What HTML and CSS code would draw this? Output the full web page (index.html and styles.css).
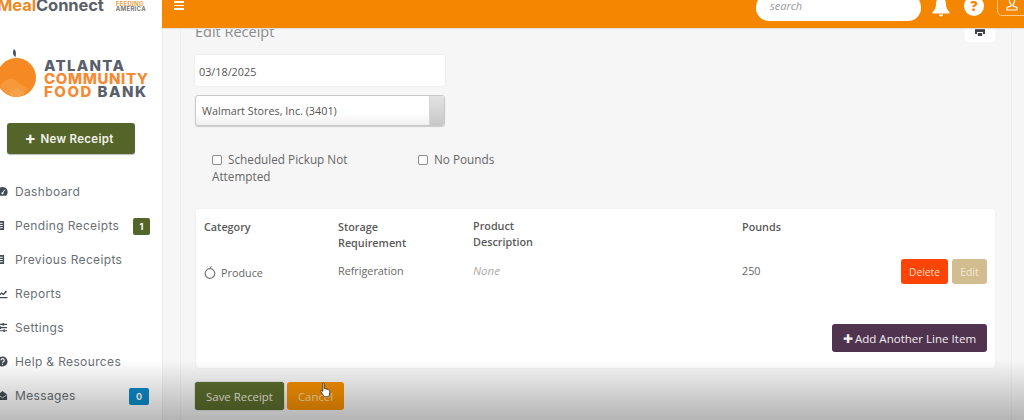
FILE: index.html
```html
<!DOCTYPE html>
<html lang="en">
<head>
<meta charset="utf-8">
<title>Edit Receipt</title>
<link rel="stylesheet" href="styles.css">
</head>
<body>
<div class="shell">
  <aside class="sidebar">
    <div class="brand">
      <span class="brand-name"><span class="brand-meal">Meal</span>Connect</span>
      <span class="brand-fa"><span class="fa-top">FEEDING</span><span>AMERICA</span></span>
    </div>
    <div class="logo">
      <svg class="apple" viewBox="0 0 38 50" width="38" height="50">
        <path d="M16 1c2 1.500 2.400 4 1.500 8-2.500-1-3.400-5-1.500-8z" fill="#4d5560"/>
        <circle cx="18.500" cy="29.500" r="19.500" fill="#f58a24"/>
        <path d="M2 38c4-6 11-9 15-6 3 2 8 7 14 9-4 5-8 8-13 8-7 0-13-5-16-11z" fill="#f7993a"/>
        <path d="M11 46c3-4 7-7 10-5l5 4c-2 2-5 4-8 4-3 0-5-1-7-3z" fill="#f6a24c"/>
      </svg>
      <div class="logo-text">
        <span class="logo-line logo-gray logo-top">ATLANTA</span>
        <span class="logo-line logo-orange">COMMUNITY</span>
        <span class="logo-line logo-bottom"><span class="logo-orange">FOOD</span> <span class="logo-gray">BANK</span></span>
      </div>
    </div>
    <button class="new-receipt"><span class="plus">+</span> New Receipt</button>
    <nav class="nav">
      <a class="nav-item"><svg class="nav-icon" viewBox="0 0 12 12"><path d="M6 1a5.500 5.500 0 0 0-5 8l1 1.500h8l1-1.500A5.500 5.500 0 0 0 6 1z" fill="#444b52"/><path d="M6 8 8.500 4" stroke="#fff" stroke-width="1" fill="none"/><circle cx="6" cy="8" r="1.200" fill="#fff"/></svg>Dashboard</a>
      <a class="nav-item"><svg class="nav-icon nav-icon-cut" viewBox="0 0 12 12"><path d="M1 1h10v10H1zM2.500 3v1.200h7V3zm0 2.400v1.200h7V5.400zm0 2.400V9h7V7.800z" fill="#444b52" fill-rule="evenodd"/></svg>Pending Receipts<span class="badge badge-green">1</span></a>
      <a class="nav-item"><svg class="nav-icon nav-icon-cut" viewBox="0 0 12 12"><path d="M1 1h10v10H1zM2.500 3v1.200h7V3zm0 2.400v1.200h7V5.400zm0 2.400V9h7V7.800z" fill="#444b52" fill-rule="evenodd"/></svg>Previous Receipts</a>
      <a class="nav-item"><svg class="nav-icon" viewBox="0 0 12 12"><path d="M1 9.800h10.500V11.200H1zM2 7.500l3-3 2 1.500L9.500 2.800 11 4 7 8 5 6.500 3 8.500z" fill="#444b52"/></svg>Reports</a>
      <a class="nav-item"><svg class="nav-icon" viewBox="0 0 12 12"><path d="M1 2h10v1.200H1zM1 5.500h10v1.200H1zM1 9h10v1.200H1zM6 1h1.500v3H6zM3 4.500h1.500v3H3zM7 8h1.500v3H7z" fill="#444b52"/></svg>Settings</a>
      <a class="nav-item"><svg class="nav-icon" viewBox="0 0 12 12"><circle cx="6" cy="6" r="5.500" fill="#444b52"/><path d="M4.300 4.600A1.800 1.800 0 1 1 6.800 6.300c-.6.300-.8.600-.8 1.100M6 8.500v1" stroke="#fff" stroke-width="1.200" fill="none"/></svg>Help &amp; Resources</a>
      <a class="nav-item"><svg class="nav-icon" viewBox="0 0 12 12"><path d="M1 5l5-4 5 4v6H1z" fill="#444b52"/><path d="M1.500 5.500 6 8.500l4.500-3" stroke="#fff" stroke-width=".8" fill="none"/></svg>Messages<span class="badge badge-blue">0</span></a>
    </nav>
  </aside>
  <div class="main">
    <header class="topbar">
      <div class="burger"><span></span><span></span><span></span></div>
      <div class="top-actions">
        <div class="search">search</div>
        <svg class="bell" viewBox="0 0 20 20" width="20" height="20"><path d="M10 0c3.500 0 5 2.500 5 6 0 4 1.500 6 3.500 8v1.500h-17V14c2-2 3.500-4 3.500-8 0-3.500 1.500-6 5-6z" fill="#fff"/><path d="M8 16.500h4c0 1-1 2-2 2s-2-1-2-2z" fill="#fff"/></svg>
        <div class="help">?</div>
        <div class="user"><svg viewBox="0 0 14 14" width="14" height="14"><path d="M4.500 1h5v4l-1.500 2.500v1.500l4 1.500V13H2v-2.500L6 9V7.500L4.500 5z" fill="none" stroke="#fff" stroke-width="1.200"/></svg></div>
      </div>
    </header>
    <div class="content">
      <div class="panel">
        <div class="title-row">
          <h1 class="title">Edit Receipt</h1>
          <div class="print"><svg viewBox="0 0 12 10" width="12" height="10"><path d="M3 0h6v3H3zM1 3h10v5H9V6H3v2H1zM3.800 7h4.400v3H3.800z" fill="#3f4347"/></svg></div>
        </div>
        <div class="field date-field">03/18/2025</div>
        <div class="field select-field"><span class="select-value">Walmart Stores, Inc. (3401)</span><span class="select-arrow"></span></div>
        <div class="checks">
          <label class="check check-wide"><span class="box"></span>Scheduled Pickup Not Attempted</label>
          <label class="check"><span class="box"></span>No Pounds</label>
        </div>
        <section class="card">
          <div class="table-head">
            <div>Category</div>
            <div>Storage<br>Requirement</div>
            <div class="head-shift">Product<br>Description</div>
            <div>Pounds</div>
          </div>
          <div class="table-row">
            <div class="cat"><svg class="cat-icon" viewBox="0 0 12 13" width="12" height="13"><circle cx="6" cy="7.500" r="4.800" fill="none" stroke="#777" stroke-width="1.200"/><path d="M6 3c0-1 .5-2 1.500-2.500" stroke="#777" stroke-width="1.200" fill="none"/></svg>Produce</div>
            <div>Refrigeration</div>
            <div class="none">None</div>
            <div class="pounds">250</div>
            <div class="row-actions"><button class="btn btn-delete">Delete</button><button class="btn btn-edit">Edit</button></div>
          </div>
          <div class="card-foot"><button class="btn-add"><span class="add-plus">✚</span>Add Another Line Item</button></div>
        </section>
        <div class="actions">
          <button class="btn-save">Save Receipt</button>
          <button class="btn-cancel">Cancel</button>
        </div>
      </div>
    </div>
  </div>
</div>
<div class="fade"></div>
<svg class="cursor" viewBox="0 0 14 20" width="11" height="16"><path d="M3.500 1.500c1-.8 2-.3 2 1V8l5 1.500c1.500.5 2 1 2 2.500l-.5 4c-.2 1.500-1 2.500-2.500 2.500H7c-1.200 0-2-.6-2.700-1.600L1 12c-.6-1 .7-2 1.600-1.200l1 1V2.500z" fill="#fff" stroke="#222" stroke-width="1"/></svg>
</body>
</html>
```
FILE: styles.css
```css
* { box-sizing: border-box; }
html, body { margin: 0; height: 420px; overflow: hidden; }
body { font-family: "Open Sans", "Liberation Sans", sans-serif; color: #555; background: #f6f6f7; position: relative; }
button { font-family: inherit; border: 0; cursor: pointer; }

.shell { display: flex; height: 420px; }

.sidebar { width: 162px; flex: none; background: #fff; box-shadow: 1px 0 0 #eee; overflow: hidden; }
.brand { display: flex; align-items: center; gap: 12px; height: 10px; margin-left: -3px; }
.brand-name { font: 700 16.500px/10px "Inter", sans-serif; color: #5a5f66; white-space: nowrap; letter-spacing: -.1px; }
.brand-meal { color: #ee8a22; }
.brand-fa { display: flex; flex-direction: column; font: 700 6px/5px "Inter", sans-serif; color: #777; letter-spacing: .3px; margin-top: 1px; }
.fa-top { color: #e9a24a; }

.logo { display: flex; align-items: flex-start; gap: 8px; margin: 38px 0 0 -2px; height: 50px; }
.apple { flex: none; }
.logo-text { display: flex; flex-direction: column; margin-top: 11px; font: 800 15px/13px "Inter", sans-serif; letter-spacing: .6px; white-space: nowrap; }
.logo-line { display: block; }
.logo-top { letter-spacing: 1.300px; }
.logo-bottom { letter-spacing: 1.500px; }
.logo-gray { color: #5a606b; }
.logo-orange { color: #f58a34; }

.new-receipt { display: block; width: 128px; height: 31px; margin: 25px 0 0 7px; background: #55652a; color: #f2f2ea; border-radius: 3px; font: 600 11.500px/31px "Inter", sans-serif; letter-spacing: .3px; box-shadow: 0 1px 1px #bbb; padding: 0 4px 0 0; }
.plus { font-size: 17px; font-weight: 700; vertical-align: -1px; margin-right: 1px; }

.nav { margin-top: 21px; }
.nav-item { display: flex; align-items: center; height: 34px; font: 400 12px/34px "Inter", sans-serif; color: #6a6f75; letter-spacing: .36px; position: relative; padding-left: 15px; }
.nav-icon { position: absolute; left: -3px; top: 11px; width: 11px; height: 11px; }
.nav-icon-cut { left: -6px; }
.badge { position: absolute; display: block; width: 17px; height: 17px; border-radius: 2px; color: #fff; font: 700 9px/17px "Inter", sans-serif; text-align: center; letter-spacing: 0; }
.badge-green { left: 133px; top: 9px; background: #55652a; }
.badge-blue { left: 129px; top: 9px; width: 20px; background: #0c8bc9; }

.main { flex: 1; min-width: 0; display: flex; flex-direction: column; }
.topbar { height: 28px; flex: none; position: relative; z-index: 2; background: #f58700; display: flex; justify-content: space-between; box-shadow: 0 1px 1px #e2e2e2; }
.burger { display: flex; flex-direction: column; gap: 2px; margin: 1px 0 0 12px; width: 10px; }
.burger span { display: block; height: 1.500px; background: #fff; }
.top-actions { display: flex; align-items: flex-start; margin-top: -6px; }
.search { width: 165px; height: 27px; background: #fff; border-radius: 13px; font: italic 11px/24px "Open Sans", sans-serif; color: #999; padding-left: 14px; margin-right: 10px; }
.bell { margin-top: 4px; margin-right: 13px; }
.help { width: 20px; height: 20px; border-radius: 50%; background: #fff; color: #f58700; font: 800 14px/20px "Open Sans", sans-serif; text-align: center; margin-top: 2px; margin-right: 13px; }
.user { width: 40px; height: 22px; border: 1px solid #f7c98a; border-radius: 5px; margin-right: -13px; padding: 2px 0 0 7px; line-height: 0; }

.content { flex: 1; margin-top: -6px; margin-left: 18px; margin-right: 12px; border-left: 1px solid #eeeeef; border-right: 1px solid #eeeeef; padding-left: 14px; padding-right: 16px; min-height: 0; }
.panel { width: 800px; }
.title-row { display: flex; justify-content: space-between; height: 33px; }
.title { margin: 0; font: 400 14.500px/19px "Open Sans", sans-serif; color: #8a8a8a; padding-top: 0; }
.print { width: 30px; height: 20px; background: #fff; border-radius: 3px; padding: 4px 0 0 9px; line-height: 0; }

.field { width: 250px; height: 31px; background: #fff; font-size: 10.800px; line-height: 31px; color: #555; border-radius: 2px; }
.date-field { padding-left: 4px; padding-top: 1px; box-shadow: 0 0 2px #ddd; }
.select-field { display: flex; margin-top: 9px; border: 1px solid #c9c9c9; border-radius: 3px; box-shadow: 0 1px 1px #ccc; background: linear-gradient(#fff 60%, #f0f0f0); line-height: 30px; overflow: hidden; }
.select-value { flex: 1; padding-left: 6px; }
.select-arrow { width: 15px; background: linear-gradient(#e2e2e2, #c8c8c8); border-left: 1px solid #d5d5d5; }

.checks { display: flex; margin-top: 25px; margin-left: 17px; font-size: 11.750px; line-height: 17px; color: #666; height: 58px; }
.check { display: block; }
.check-wide { width: 206px; padding-right: 56px; }
.box { display: inline-block; width: 10px; height: 10px; border: 1px solid #888; border-radius: 2px; background: #fff; margin-right: 6px; vertical-align: -1px; }

.card { margin-left: 1px; width: 799px; height: 159px; background: #fff; border-radius: 3px; box-shadow: 0 0 2px #e8e8e8; padding: 10px 8px 0; font-size: 10.800px; color: #666; }
.table-head { display: grid; grid-template-columns: 134px 135px 269px 1fr; height: 40px; font-weight: 600; line-height: 15.500px; color: #5a5a5a; }
.head-shift { margin-top: -1px; }
.table-row { display: grid; grid-template-columns: 134px 135px 269px 100px 1fr; height: 65px; line-height: 23px; }
.cat { display: flex; align-items: center; height: 25px; margin-top: 1px; margin-left: 0; }
.cat-icon { margin-right: 5px; }
.none { font-style: italic; font-size: 11.500px; color: #aaa; }
.row-actions { display: flex; justify-content: flex-end; gap: 4px; }
.btn { height: 25px; border-radius: 3px; color: #f6dfc8; font-size: 10.300px; padding: 0; }
.btn-delete { width: 47px; background: #fb4406; }
.btn-edit { width: 35px; background: #d2bd90; color: #f1e9d6; }
.card-foot { display: flex; justify-content: flex-end; }
.btn-add { width: 155px; height: 28px; border-radius: 3px; background: #50344f; color: #f2eef2; font-size: 11.550px; padding: 0; white-space: nowrap; }
.add-plus { margin-right: 2px; font-size: 12px; }

.actions { display: flex; gap: 3px; margin-top: 14px; }
.btn-save { width: 89px; height: 28px; border-radius: 3px; background: #5c6d2d; color: #e8e8dc; font-size: 11.400px; padding: 0; box-shadow: 0 0 1px #444; }
.btn-cancel { width: 57px; height: 28px; border-radius: 3px; background: #f59000; color: #f7dda5; font-size: 11.400px; padding: 0; }

.fade { position: absolute; left: 0; right: 0; bottom: 0; height: 60px; background: linear-gradient(rgba(0,0,0,0), rgba(0,0,0,.27)); pointer-events: none; z-index: 3; }
.cursor { position: absolute; left: 320px; top: 382px; z-index: 4; }
```
